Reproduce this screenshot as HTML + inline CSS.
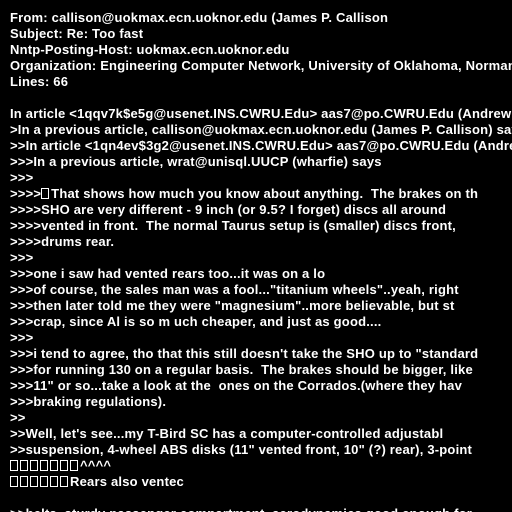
<!DOCTYPE html>
<html><head><meta charset="utf-8"><style>
html,body{margin:0;padding:0;background:#000;width:512px;height:512px;overflow:hidden}
pre{margin:0;padding:10px 0 0 10px;font-family:"Liberation Sans",sans-serif;font-weight:bold;font-size:13px;line-height:16px;color:#fff;white-space:pre;letter-spacing:0.2px}
b{display:inline-block;width:6px;height:9px;border:1px solid #fff;margin-right:2px;vertical-align:-1px;font-weight:normal;letter-spacing:0}
</style></head><body><pre>From: callison@uokmax.ecn.uoknor.edu (James P. Callison
Subject: Re: Too fast
Nntp-Posting-Host: uokmax.ecn.uoknor.edu
Organization: Engineering Computer Network, University of Oklahoma, Norman
Lines: 66

In article &lt;1qqv7k$e5g@usenet.INS.CWRU.Edu&gt; aas7@po.CWRU.Edu (Andrew A
&gt;In a previous article, callison@uokmax.ecn.uoknor.edu (James P. Callison) says
&gt;&gt;In article &lt;1qn4ev$3g2@usenet.INS.CWRU.Edu&gt; aas7@po.CWRU.Edu (Andrew
&gt;&gt;&gt;In a previous article, wrat@unisql.UUCP (wharfie) says
&gt;&gt;&gt;
&gt;&gt;&gt;&gt;<b></b>That shows how much you know about anything.  The brakes on th
&gt;&gt;&gt;&gt;SHO are very different - 9 inch (or 9.5? I forget) discs all around
&gt;&gt;&gt;&gt;vented in front.  The normal Taurus setup is (smaller) discs front,
&gt;&gt;&gt;&gt;drums rear.
&gt;&gt;&gt;
&gt;&gt;&gt;one i saw had vented rears too...it was on a lo
&gt;&gt;&gt;of course, the sales man was a fool..."titanium wheels"..yeah, right
&gt;&gt;&gt;then later told me they were "magnesium"..more believable, but st
&gt;&gt;&gt;crap, since Al is so m uch cheaper, and just as good....
&gt;&gt;&gt;
&gt;&gt;&gt;i tend to agree, tho that this still doesn't take the SHO up to "standard
&gt;&gt;&gt;for running 130 on a regular basis.  The brakes should be bigger, like
&gt;&gt;&gt;11" or so...take a look at the  ones on the Corrados.(where they hav
&gt;&gt;&gt;braking regulations).
&gt;&gt;
&gt;&gt;Well, let's see...my T-Bird SC has a computer-controlled adjustabl
&gt;&gt;suspension, 4-wheel ABS disks (11" vented front, 10" (?) rear), 3-point
<b></b><b></b><b></b><b></b><b></b><b></b><b></b>^^^^
<b></b><b></b><b></b><b></b><b></b><b></b>Rears also ventec

&gt;&gt;belts, sturdy passenger compartment, aerodynamics good enough for
</pre></body></html>
